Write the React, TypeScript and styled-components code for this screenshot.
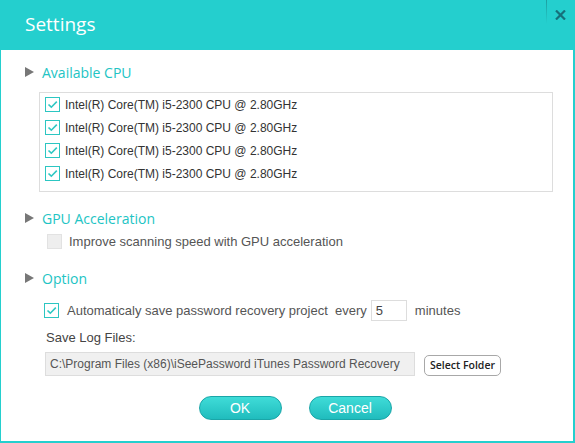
import { Fragment } from "react"
import styled, { createGlobalStyle } from "styled-components"

const GlobalStyle = createGlobalStyle`
    html, body {
        margin: 0;
        padding: 0;
        background: #ffffff;
    }
    * {
        box-sizing: border-box;
    }
`

const teal = "#24cfce"

const Window = styled('div')`
    width: 575px;
    height: 443px;
    display: flex;
    flex-direction: column;
    background: #ffffff;
    border-style: solid;
    border-color: ${teal};
    border-width: 0 2px 2px 1px;
    font-family: "Liberation Sans", Arial, sans-serif;
    overflow: hidden;
`

const TitleBar = styled('div')`
    height: 50px;
    flex-shrink: 0;
    display: flex;
    align-items: center;
    background: ${teal};
    padding-left: 24px;
    padding-bottom: 2px;
`

const Title = styled('h1')`
    flex: 1;
    margin: 0;
    font-family: "Open Sans", "Noto Sans", sans-serif;
    font-size: 19px;
    font-weight: 400;
    color: #ffffff;
`

const Separator = styled('div')`
    align-self: flex-start;
    width: 1px;
    height: 24px;
    background: linear-gradient(#1d9fa0, rgba(29, 159, 160, 0));
`

const CloseButton = styled('button')`
    align-self: flex-start;
    width: 26px;
    height: 29px;
    padding: 0;
    margin: 0;
    border: none;
    background: transparent;
    display: flex;
    align-items: center;
    justify-content: center;
    cursor: pointer;
`

const Body = styled('div')`
    flex: 1;
    display: flex;
    flex-direction: column;
    padding-top: 12px;
`

const Heading = styled('div') <{ $top?: number }>`
    display: flex;
    align-items: center;
    height: 20px;
    margin-top: ${p => p.$top ?? 0}px;
    padding-left: 24px;
    gap: 8px;
    font-family: "Open Sans", "Noto Sans", sans-serif;
    font-size: 14px;
    color: #22c4c4;
`

const Arrow = styled('span')`
    width: 0;
    height: 0;
    border-top: 5px solid transparent;
    border-bottom: 5px solid transparent;
    border-left: 9px solid #777777;
`

const CpuList = styled('div')`
    margin: 10px 0 0 38px;
    width: 514px;
    height: 100px;
    border: 1px solid #dddddd;
    padding: 0 5px;
    display: flex;
    flex-direction: column;
`

const Row = styled('label') <{ $height?: number, $left?: number, $gap?: number, $top?: number }>`
    display: flex;
    align-items: center;
    height: ${p => p.$height ?? 23}px;
    margin-top: ${p => p.$top ?? 0}px;
    padding-left: ${p => p.$left ?? 0}px;
    gap: ${p => p.$gap ?? 5}px;
    font-size: ${p => p.$height ? 13 : 12}px;
    color: #555555;
    white-space: nowrap;
`

const CpuText = styled('span')`
    color: #333333;
`

const Box = styled('span') <{ $checked?: boolean, $disabled?: boolean }>`
    flex-shrink: 0;
    width: 15px;
    height: 15px;
    display: flex;
    align-items: center;
    justify-content: center;
    background: ${p => p.$disabled ? "#eeeeee" : "#ffffff"};
    border: 1px solid ${p => p.$disabled ? "#e2e2e2" : "#2cc6c2"};
`

const MinutesInput = styled('span')`
    width: 36px;
    height: 21px;
    margin-left: -4px;
    padding-left: 4px;
    display: flex;
    align-items: center;
    border: 1px solid #dddddd;
    color: #444444;
`

const Label = styled('div')`
    margin: 8px 0 0 45px;
    height: 18px;
    line-height: 18px;
    font-size: 13px;
    color: #444444;
`

const PathRow = styled('div')`
    display: flex;
    align-items: center;
    gap: 9px;
    margin: 5px 0 0 44px;
`

const PathField = styled('div')`
    width: 370px;
    height: 24px;
    padding-left: 4px;
    display: flex;
    align-items: center;
    background: #f0f0f0;
    border: 1px solid #dddddd;
    font-size: 12px;
    color: #555555;
    white-space: nowrap;
    overflow: hidden;
`

const FolderButton = styled('button')`
    width: 77px;
    height: 21px;
    padding: 0;
    margin-top: 2px;
    background: #ffffff;
    border: 1px solid #a8a8a8;
    border-radius: 5px;
    font-family: "Open Sans", "Noto Sans", sans-serif;
    font-size: 10.5px;
    font-weight: 600;
    color: #222222;
`

const Actions = styled('div')`
    display: flex;
    justify-content: center;
    gap: 27px;
    margin-top: 20px;
    padding-left: 16px;
`

const ActionButton = styled('button')`
    width: 83px;
    height: 24px;
    padding: 0;
    border: 1px solid #1aa6a8;
    border-radius: 12px;
    background: linear-gradient(#3fdcd8, #20bcbd);
    color: #ffffff;
    font-family: "Liberation Sans", Arial, sans-serif;
    font-size: 14px;
    cursor: pointer;
`

const Check = ({ checked, disabled }: { checked?: boolean, disabled?: boolean }): JSX.Element => (
    <Box $checked={checked} $disabled={disabled}>
        {checked && (
            <svg width="13" height="13" viewBox="0 0 13 13">
                <path d="M2.5 6.5 L5.3 9.2 L10.8 3.6" fill="none" stroke="#2fc8c3" strokeWidth="1.6" />
            </svg>
        )}
    </Box>
)

const App = (): JSX.Element => {

    const cpus: string[] = [
        "Intel(R) Core(TM) i5-2300 CPU @ 2.80GHz",
        "Intel(R) Core(TM) i5-2300 CPU @ 2.80GHz",
        "Intel(R) Core(TM) i5-2300 CPU @ 2.80GHz",
        "Intel(R) Core(TM) i5-2300 CPU @ 2.80GHz",
    ]

    return (
        <Fragment>
            <GlobalStyle />
            <Window>
                <TitleBar>
                    <Title>Settings</Title>
                    <Separator />
                    <CloseButton aria-label="Close">
                        <svg width="11" height="10" viewBox="0 0 11 10">
                            <path d="M1 0.5 L10 9.5 M10 0.5 L1 9.5" stroke="#16707a" strokeWidth="2.2" />
                        </svg>
                    </CloseButton>
                </TitleBar>

                <Body>
                    <Heading><Arrow />Available CPU</Heading>
                    <CpuList>
                        {cpus.map((v, i) => (
                            <Row key={i}>
                                <Check checked />
                                <CpuText>{v}</CpuText>
                            </Row>
                        ))}
                    </CpuList>

                    <Heading $top={16}><Arrow />GPU Acceleration</Heading>
                    <Row $height={20} $top={3} $left={46} $gap={7}>
                        <Check disabled />
                        Improve scanning speed with GPU acceleration
                    </Row>

                    <Heading $top={17}><Arrow />Option</Heading>
                    <Row $height={22} $top={11} $left={43} $gap={8}>
                        <Check checked />
                        Automaticaly save password recovery project&nbsp;&nbsp;every
                        <MinutesInput>5</MinutesInput>
                        minutes
                    </Row>

                    <Label>Save Log Files:</Label>
                    <PathRow>
                        <PathField>C:\Program Files (x86)\iSeePassword iTunes Password Recovery</PathField>
                        <FolderButton>Select Folder</FolderButton>
                    </PathRow>

                    <Actions>
                        <ActionButton>OK</ActionButton>
                        <ActionButton>Cancel</ActionButton>
                    </Actions>
                </Body>
            </Window>
        </Fragment>
    )
}

export default App
